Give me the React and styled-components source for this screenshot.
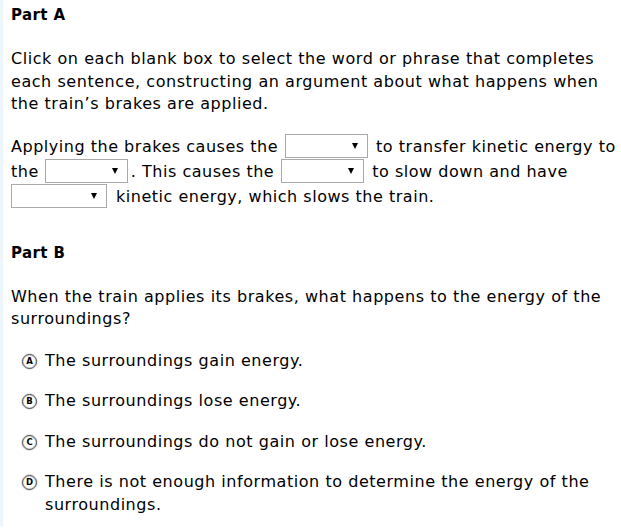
import React from 'react';
import styled, { createGlobalStyle } from 'styled-components';

const Global = createGlobalStyle`
  html, body { margin: 0; padding: 0; background: #fff; }
  body { font-family: "DejaVu Sans", Verdana, sans-serif; color: #000; }
`;

const Page = styled.div`
  display: flex;
  flex-direction: column;
  border-left: 3px solid #eef6fd;
  padding: 5px 2px 10px 8px;
  width: 621px;
  box-sizing: border-box;
`;

const Heading = styled.h2`
  font-size: 15px;
  font-weight: bold;
  letter-spacing: 0.4px;
  margin: 0 0 23px 0;
  line-height: 20px;
`;

const Para = styled.p`
  font-size: 16px;
  letter-spacing: 0.55px;
  line-height: 22.5px;
  margin: 0 0 ${p => p.$gap || 0}px 0;
`;

const Sentence = styled.p`
  font-size: 16px;
  letter-spacing: 0.52px;
  line-height: 25px;
  margin: 0 0 34px 0;
`;

// empty dropdown blank, small black caret at the right
const Blank = styled.span`
  display: inline-block;
  box-sizing: border-box;
  width: ${p => p.$w}px;
  height: 24px;
  border: 1px solid #a9a9a9;
  vertical-align: -6px;
  margin: 0 ${p => p.$mr ?? 8}px 0 ${p => p.$ml ?? 7}px;
  position: relative;

  &::after {
    content: '';
    position: absolute;
    right: 9px;
    top: 8px;
    border-left: 3.5px solid transparent;
    border-right: 3.5px solid transparent;
    border-top: 6px solid #000;
  }
`;

const Options = styled.div`
  display: flex;
  flex-direction: column;
  gap: 18px;
  margin-top: 19px;
`;

const Option = styled.div`
  display: flex;
  align-items: flex-start;
  font-size: 16px;
  letter-spacing: 0.55px;
  line-height: 22.5px;
`;

const Bubble = styled.span`
  flex: none;
  box-sizing: border-box;
  width: 15px;
  height: 15px;
  border: 1.5px solid #444;
  border-radius: 50%;
  box-shadow: inset 0 0 0 1px #ddd, 0 0 0 1px #e6e6e6;
  font-size: 8.5px;
  font-weight: bold;
  letter-spacing: 0;
  display: flex;
  align-items: center;
  justify-content: center;
  margin: 4px 8px 0 11px;
  color: #000;
`;

const options = [
  ['A', 'The surroundings gain energy.'],
  ['B', 'The surroundings lose energy.'],
  ['C', 'The surroundings do not gain or lose energy.'],
  ['D', 'There is not enough information to determine the energy of the surroundings.'],
];

export default function App() {
  return (
    <Page>
      <Global />
      <Heading>Part A</Heading>
      <Para $gap={18}>
        Click on each blank box to select the word or phrase that completes each sentence, constructing an argument about what happens when the train’s brakes are applied.
      </Para>
      <Sentence>
        Applying the brakes causes the<Blank $w={83} />to transfer kinetic energy to the<Blank $w={83} $ml={6} $mr={3} />. This causes the<Blank $w={83} />to slow down and have <Blank $w={96} $ml={0} $mr={9} />kinetic energy, which slows the train.
      </Sentence>
      <Heading>Part B</Heading>
      <Para>
        When the train applies its brakes, what happens to the energy of the surroundings?
      </Para>
      <Options>
        {options.map(([l, t]) => (
          <Option key={l}>
            <Bubble>{l}</Bubble>
            <span>{t}</span>
          </Option>
        ))}
      </Options>
    </Page>
  );
}
